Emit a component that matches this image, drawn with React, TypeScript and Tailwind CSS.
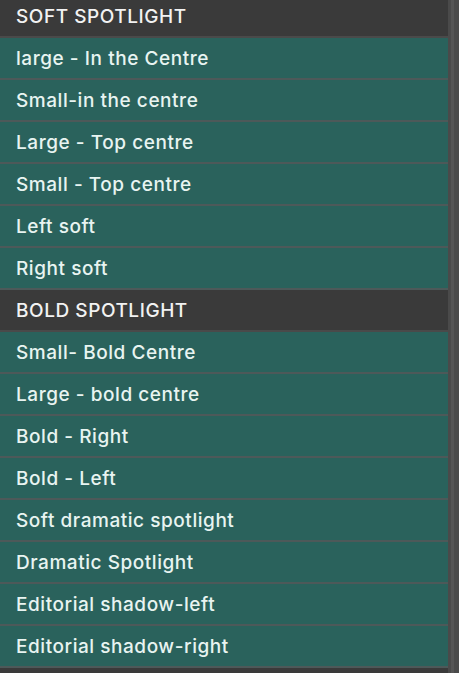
import React from "react";

type Row = { label: string; header?: boolean };

const rows: Row[] = [
  { label: "SOFT SPOTLIGHT", header: true },
  { label: "large - In the Centre" },
  { label: "Small-in the centre" },
  { label: "Large - Top centre" },
  { label: "Small - Top centre" },
  { label: "Left soft" },
  { label: "Right soft" },
  { label: "BOLD SPOTLIGHT", header: true },
  { label: "Small- Bold Centre" },
  { label: "Large - bold centre" },
  { label: "Bold - Right" },
  { label: "Bold - Left" },
  { label: "Soft dramatic spotlight" },
  { label: "Dramatic Spotlight" },
  { label: "Editorial shadow-left" },
  { label: "Editorial shadow-right" },
];

export default function App() {
  return (
    <div
      className="w-[459px] h-[673px] overflow-hidden bg-[#3a3a3a] flex"
      style={{ fontFamily: "Inter, 'Noto Sans', sans-serif" }}
    >
      <div className="w-[448px] flex flex-col -mt-[4px]">
        {rows.map((r, i) => (
          <div
            key={i}
            className={`h-[42px] shrink-0 border-b-2 flex items-center pl-[16px] pt-[2px] text-[19px] font-medium tracking-[0.55px] ${
              r.header
                ? "bg-[#3a3a3a] border-[#4a4a4a] text-[#f2f2f2]"
                : "bg-[#2a625c] border-[#4d5959] text-[#e8f4f1]"
            }`}
          >
            {r.label}
          </div>
        ))}
      </div>
      <div className="w-[11px] h-full bg-[#4a4a4a] flex">
        <div className="w-[3px]" />
        <div className="w-[3px] bg-[#555555]" />
      </div>
    </div>
  );
}
